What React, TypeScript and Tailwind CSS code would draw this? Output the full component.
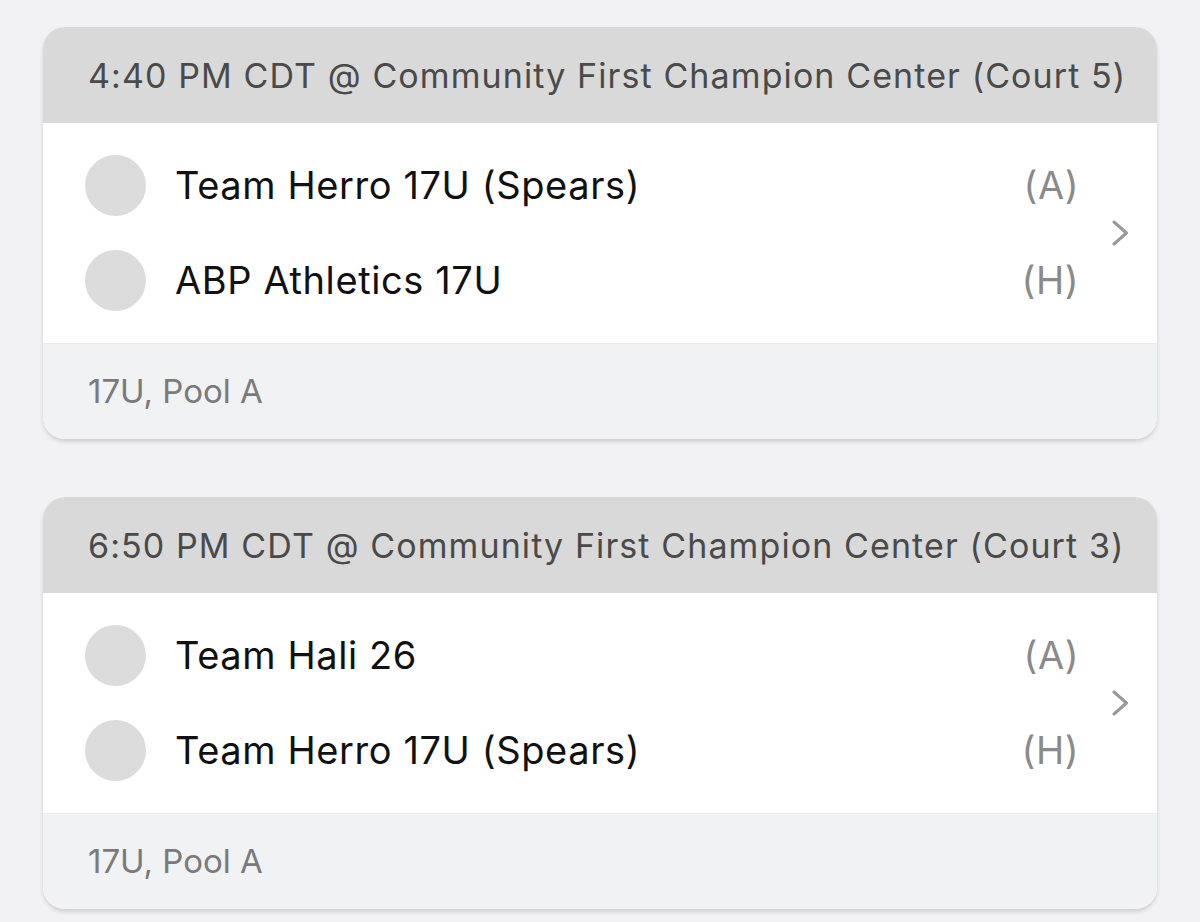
import React from 'react';

type Game = {
  time: string;
  venue: string;
  away: string;
  home: string;
  division: string;
};

const games: Game[] = [
  {
    time: '4:40 PM CDT',
    venue: 'Community First Champion Center (Court 5)',
    away: 'Team Herro 17U (Spears)',
    home: 'ABP Athletics 17U',
    division: '17U, Pool A',
  },
  {
    time: '6:50 PM CDT',
    venue: 'Community First Champion Center (Court 3)',
    away: 'Team Hali 26',
    home: 'Team Herro 17U (Spears)',
    division: '17U, Pool A',
  },
];

const TeamRow: React.FC<{ name: string; side: string }> = ({ name, side }) => (
  <div className="flex items-center h-[95px]">
    <div className="w-[61px] h-[61px] rounded-full bg-[#dcdcdc] shrink-0" />
    <span className="ml-[29px] flex-1 text-[38px] tracking-[0.6px] text-[#111]">{name}</span>
    <span className="text-[38px] tracking-[0.5px] text-[#8a8a8a]">{side}</span>
  </div>
);

const GameCard: React.FC<{ game: Game }> = ({ game }) => (
  <div className="rounded-[22px] overflow-hidden bg-white shadow-[0_3px_4px_rgba(0,0,0,0.14)]">
    {/* Header */}
    <div className="h-[96px] bg-[#d9d9d9] flex items-center pl-[45px] text-[34px] tracking-[1.1px] text-[#4a4a4a]">
      {game.time} @ {game.venue}
    </div>

    {/* Teams */}
    <div className="h-[220px] flex items-center pl-[42px] pr-[28px]">
      <div className="flex-1 flex flex-col py-[15px]">
        <TeamRow name={game.away} side="(A)" />
        <TeamRow name={game.home} side="(H)" />
      </div>
      <svg className="ml-[32px] w-[18px] h-[26px]" viewBox="0 0 18 26" fill="none">
        <path d="M3 2l12.5 11L3 24" stroke="#999999" strokeWidth="3" strokeLinecap="round" strokeLinejoin="round" />
      </svg>
    </div>

    {/* Footer */}
    <div className="h-[96px] bg-[#f1f2f4] border-t border-[#ececee] flex items-center pl-[45px] text-[33px] text-[#7a7a7a]">
      {game.division}
    </div>
  </div>
);

const App: React.FC = () => {
  return (
    <div
      className="min-h-[922px] bg-[#f2f2f4] pt-[27px] px-[43px] flex flex-col gap-[58px]"
      style={{ fontFamily: 'Inter, "Noto Sans", sans-serif' }}
    >
      {games.map((g, i) => (
        <GameCard key={i} game={g} />
      ))}
    </div>
  );
};

export default App;
